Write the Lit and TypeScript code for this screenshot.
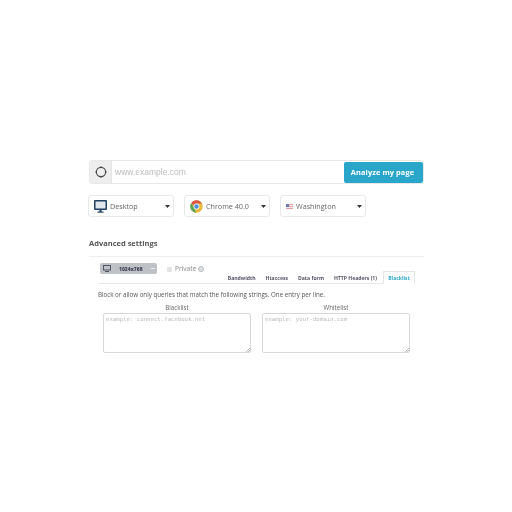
import { LitElement, html, css } from "lit";
import { customElement } from "lit/decorators.js";

const caret = html`<svg class="caret" width="5" height="3" viewBox="0 0 5 3"><path d="M0 0h5L2.5 3z" fill="#333"/></svg>`;

@customElement("app-root")
export class AppRoot extends LitElement {
  static styles = css`
    :host { display: block; width: 512px; height: 512px; background: #fff; font-family: "Open Sans", sans-serif; color: #555; box-sizing: border-box; padding: 160px 88px 0 89px; filter: blur(0.55px); }
    * { box-sizing: border-box; }
    .search { display: flex; align-items: center; height: 24px; width: 335px; border: 1px solid #e8e8e8; border-radius: 3px; background: #fff; }
    .target { width: 22px; height: 22px; background: #eee; display: flex; align-items: center; justify-content: center; border-right: 1px solid #e4e4e4; flex: none; }
    .url { flex: 1; padding-left: 3px; font-family: "Liberation Sans", sans-serif; font-size: 8.5px; color: #bbb; }
    .go { width: 79px; height: 21px; background: #2ba6cb; border-radius: 2px; color: #fff; font-size: 7.4px; font-weight: 700; display: flex; align-items: center; justify-content: center; letter-spacing: .1px; padding-right: 2px; }
    .selects { display: flex; gap: 10px; margin: 11px 0 0 -1px; }
    .sel { width: 86px; height: 22px; border: 1px solid #e8e8e8; border-radius: 3px; display: flex; align-items: center; font-size: 7.2px; color: #666; padding: 0 3px 0 5px; position: relative; }
    .sel .lbl { flex: 1; }
    .mon { margin-right: 3px; }
    .chrome { margin-left: 0; margin-right: 3px; }
    .flag { margin: 0 3px 0 0; }
    h3 { margin: 21px 0 0; font-size: 7.5px; line-height: 10px; font-weight: 700; color: #555; }
    .rule { height: 1px; background: #eee; margin-top: 8px; }
    .adv { padding: 0 9px 0 9px; }
    .toprow { display: flex; height: 27px; position: relative; border-bottom: 1px solid #e8e8e8; }
    .pill { position: absolute; left: 2px; top: 6px; width: 57px; height: 11px; background: #bec2c6; border-radius: 2px; display: flex; align-items: center; font-size: 5px; font-weight: 700; color: #445; padding-left: 3px; }
    .pill b { margin-left: 8px; }
    .pill i { margin-left: 8px; width: 4px; height: 1px; background: #eef0f2; }
    .priv { position: absolute; left: 69px; top: 7px; display: flex; align-items: center; font-size: 6.6px; color: #888; line-height: 10px; }
    .box { width: 5px; height: 5px; background: #e4e4e4; border-radius: 1px; margin-right: 3px; }
    .info { width: 6px; height: 6px; border-radius: 50%; border: 1px solid #b5bcc0; background: #dfe3e6; margin-left: 2px; }
    .tabs { position: absolute; right: 0; bottom: -1px; display: flex; align-items: flex-end; gap: 10px; font-size: 5.1px; font-weight: 700; color: #556; }
    .tab { line-height: 8px; padding-bottom: 2px; }
    .tab.on { width: 32px; height: 13px; margin-left: -4px; border: 1px solid #e4e4e4; border-bottom-color: #fff; background: #fff; color: #2ba6cb; text-align: center; line-height: 10px; padding: 1px 0 0; border-radius: 1px 1px 0 0; }
    .desc { font-size: 6.2px; line-height: 10px; color: #555; margin-top: 6px; white-space: nowrap; }
    .cols { display: flex; gap: 11px; margin: 3px 0 0 5px; }
    .col { width: 148px; }
    .col label { display: block; text-align: center; font-size: 6.2px; line-height: 9px; color: #666; }
    .ta { height: 40px; margin-top: 1px; border: 1px solid #d8d8d8; border-radius: 2px; font-family: "DejaVu Sans Mono", monospace; font-size: 5.7px; color: #bbb; padding: 1px 2px; position: relative; line-height: 8px; }
    .grip { position: absolute; right: 0; bottom: 0; }
  `;

  render() {
    const grip = html`<svg class="grip" width="5" height="5" viewBox="0 0 5 5"><path d="M1 5L5 1M3 5L5 3" stroke="#999" stroke-width=".7"/></svg>`;
    return html`
      <div class="search">
        <div class="target"><svg width="12" height="12" viewBox="0 0 12 12" fill="none" stroke="#444"><circle cx="6" cy="6" r="4.6" stroke-width="1.1"/><path d="M6 0v1.5M6 10.5V12M0 6h1.5M10.5 6H12" stroke-width=".8"/></svg></div>
        <div class="url">www.example.com</div>
        <div class="go">Analyze my page</div>
      </div>
      <div class="selects">
        <div class="sel">
          <svg class="mon" width="13" height="13" viewBox="0 0 13 13"><rect x="0" y="0" width="13" height="10" rx="1" fill="#1f3f5f"/><rect x="1.5" y="1.5" width="10" height="7" fill="#dfe6ec"/><rect x="5.5" y="10" width="2" height="2" fill="#1f3f5f"/><rect x="3.5" y="11.5" width="6" height="1.2" fill="#1f3f5f"/></svg>
          <span class="lbl">Desktop</span>${caret}
        </div>
        <div class="sel">
          <svg class="chrome" width="13" height="13" viewBox="0 0 13 13"><circle cx="6.5" cy="6.5" r="6.2" fill="#e8b93a"/><path d="M1.2 3.3A6.2 6.2 0 0 1 11.9 3.4H6.5a3 3 0 0 0-2.8 2z" fill="#d9534a"/><path d="M1.2 3.3l3.3 5.5 1.7 3.9A6.2 6.2 0 0 1 1.2 3.3z" fill="#5aa85a"/><circle cx="6.5" cy="6.5" r="2.9" fill="#fff"/><circle cx="6.5" cy="6.5" r="2.2" fill="#4a8fe0"/></svg>
          <span class="lbl">Chrome 40.0</span>${caret}
        </div>
        <div class="sel">
          <svg class="flag" width="7" height="5" viewBox="0 0 7 5"><rect width="7" height="5" fill="#e8a0a8"/><rect y="1" width="7" height="1" fill="#f5e8e8"/><rect y="3" width="7" height="1" fill="#f5e8e8"/><rect width="3" height="3" fill="#6a78b0"/></svg>
          <span class="lbl">Washington</span>${caret}
        </div>
      </div>
      <h3>Advanced settings</h3>
      <div class="rule"></div>
      <div class="adv">
        <div class="toprow">
          <div class="pill">
            <svg width="8" height="7" viewBox="0 0 8 7" fill="none" stroke="#556"><rect x=".5" y=".5" width="7" height="4.5"/><path d="M2 6.5h4"/></svg>
            <b>1024x768</b><i></i>
          </div>
          <div class="priv"><span class="box"></span>Private<span class="info"></span></div>
          <div class="tabs">
            <span class="tab">Bandwidth</span><span class="tab">Htaccess</span><span class="tab">Data form</span><span class="tab">HTTP Headers (1)</span><span class="tab on">Blacklist</span>
          </div>
        </div>
        <div class="desc">Block or allow only queries that match the following strings. One entry per line.</div>
        <div class="cols">
          <div class="col"><label>Blacklist</label><div class="ta">example: connect.facebook.net${grip}</div></div>
          <div class="col"><label>Whitelist</label><div class="ta">example: your-domain.com${grip}</div></div>
        </div>
      </div>
    `;
  }
}
